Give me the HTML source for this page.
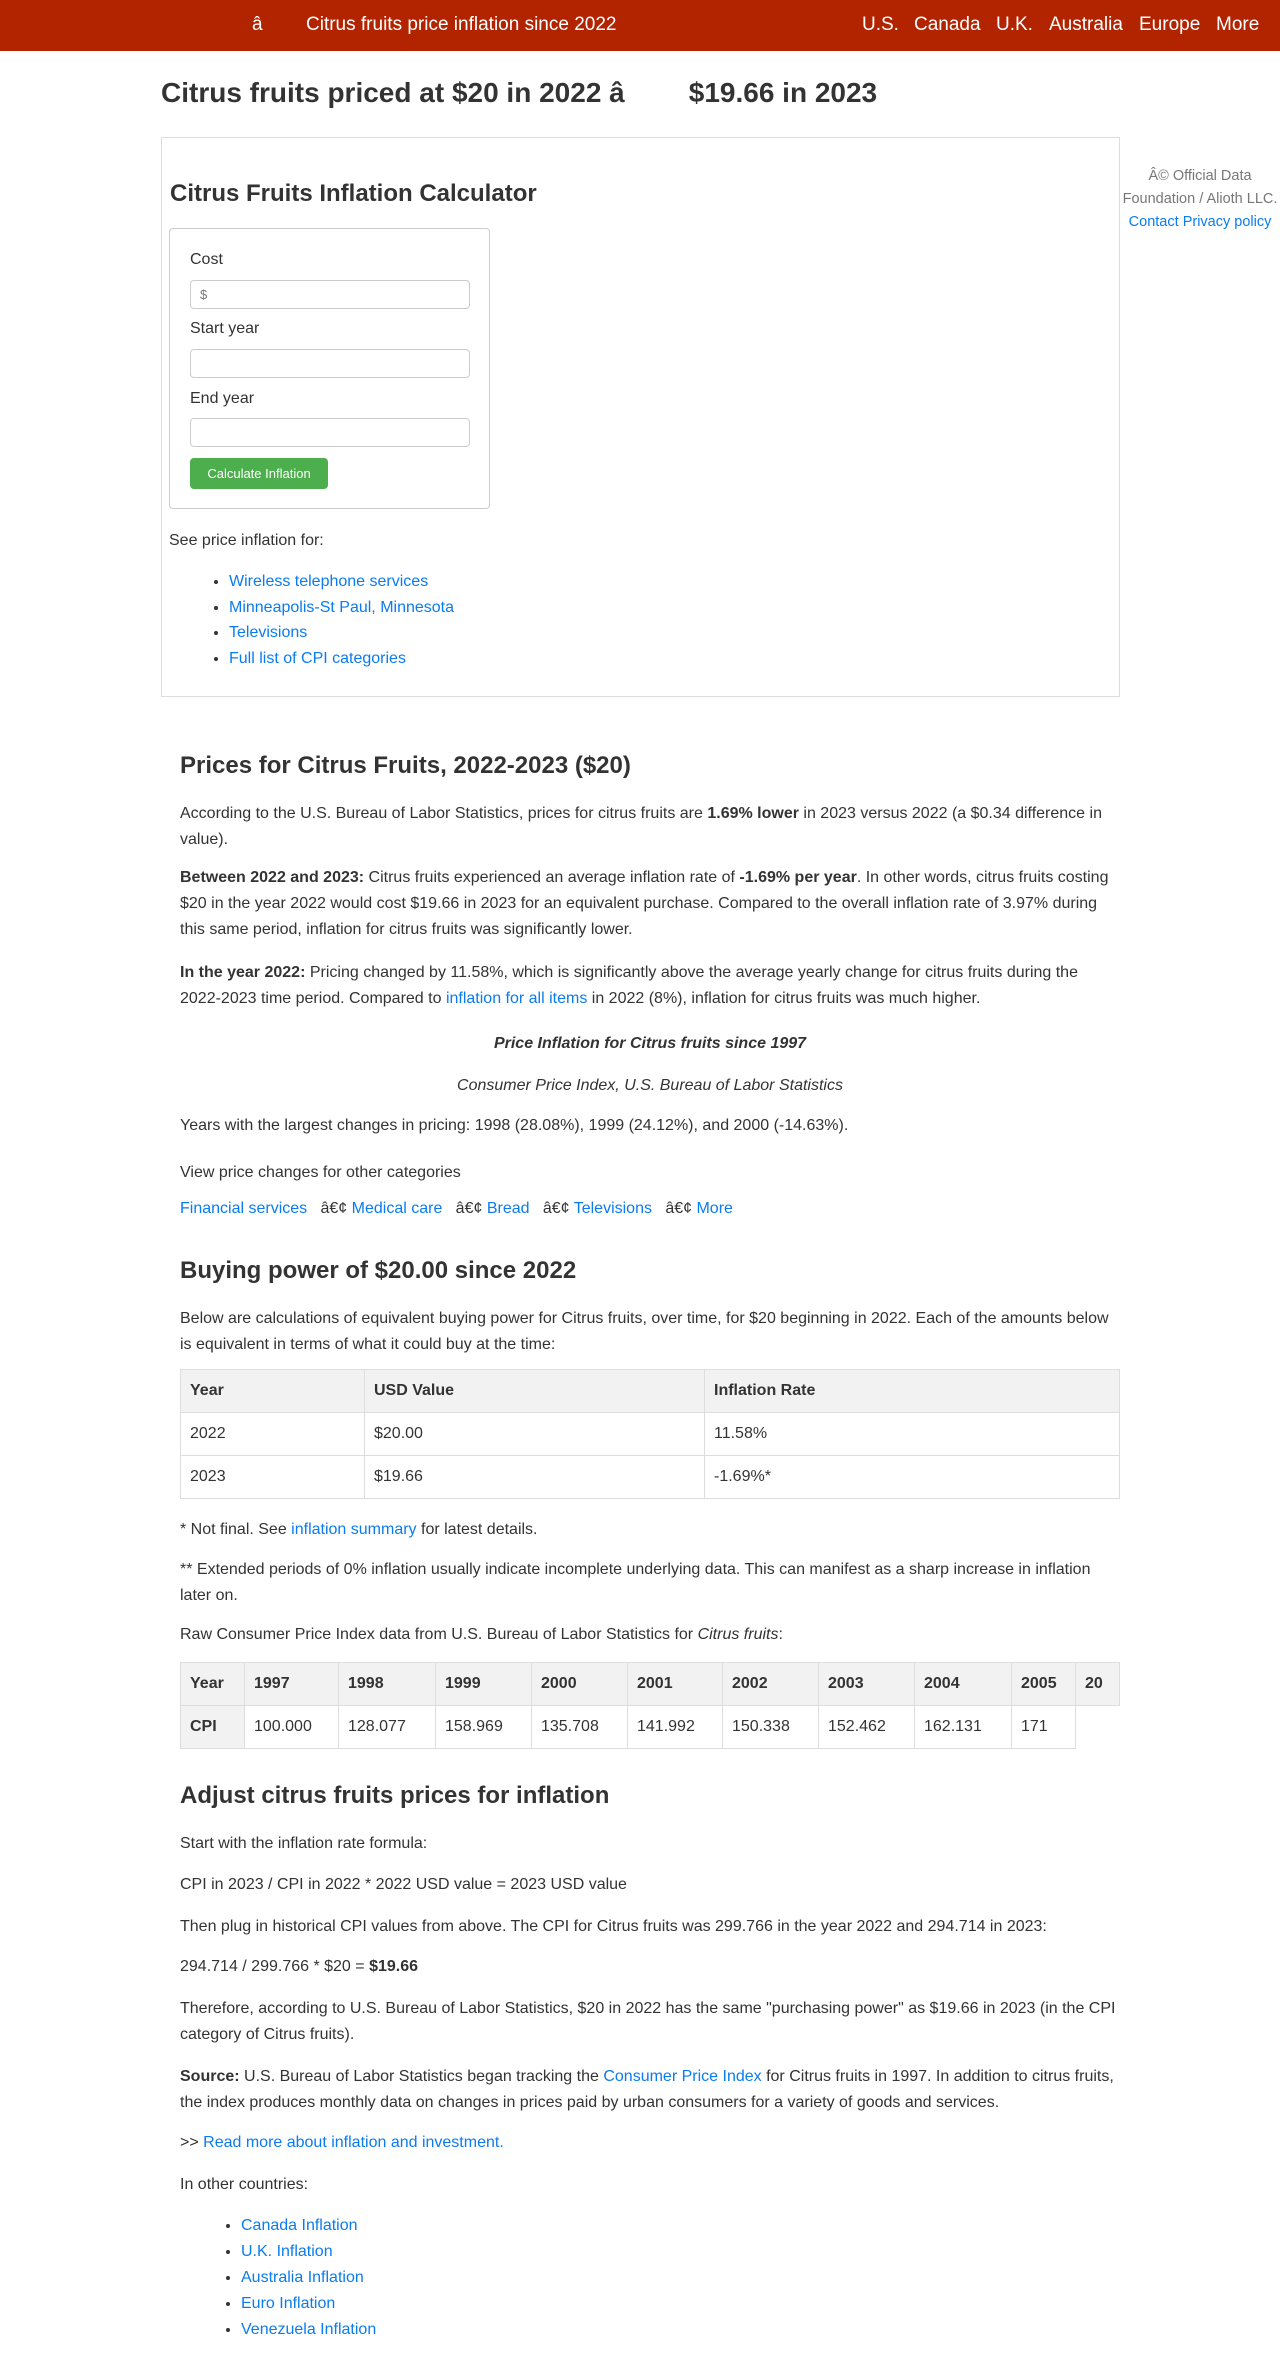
<!DOCTYPE html>
<html><head><meta charset="utf-8">
<style>
*{margin:0;padding:0;box-sizing:border-box}
body{width:1280px;height:2359px;position:relative;font-family:"Liberation Sans",Arial,sans-serif;color:#333;font-size:16px;line-height:26px;background:#fff;overflow:hidden}
.a{position:absolute}
a{color:#0a7cf0;text-decoration:none}
#hdr{left:0;top:0;width:1280px;height:51px;background:#b22400;color:#fff}
#hdr .n{position:absolute;top:12px;font-size:19px;line-height:26px;white-space:nowrap}
h1{font-size:28px;font-weight:bold;line-height:34px}
h2{font-size:24px;font-weight:bold;line-height:30px}
.p{left:180px;width:940px}
input{position:absolute;left:190px;width:280px;height:29px;border:1px solid #ccc;border-radius:4px;font-size:13px;padding-left:9px;color:#777;font-family:"Liberation Sans",sans-serif}
ul{list-style:disc}
table{border-collapse:collapse;position:absolute}
td,th{border:1px solid #ddd;text-align:left;padding:0 9px;height:43px;font-size:16px}
th{background:#f2f2f2;font-weight:bold}
.sb div{white-space:nowrap}
</style></head><body>
<div id="hdr" class="a">
<div class="n" style="left:252px">â</div>
<div class="n" style="left:306px">Citrus fruits price inflation since 2022</div>
<div class="n" style="left:862px">U.S.</div>
<div class="n" style="left:914px">Canada</div>
<div class="n" style="left:996px">U.K.</div>
<div class="n" style="left:1049px">Australia</div>
<div class="n" style="left:1139px">Europe</div>
<div class="n" style="left:1216px">More</div>
</div>
<h1 class="a" style="left:161px;top:76px;white-space:nowrap">Citrus fruits priced at $20 in 2022 â<span style="display:inline-block;width:64px"></span>$19.66 in 2023</h1>

<div class="a" style="left:161px;top:137px;width:959px;height:560px;border:1px solid #ddd"></div>
<h2 class="a" style="left:170px;top:179px">Citrus Fruits Inflation Calculator</h2>
<div class="a" style="left:169px;top:228px;width:321px;height:281px;border:1px solid #ccc;border-radius:4px"></div>
<div class="a" style="left:190px;top:247px">Cost</div>
<input style="top:280px" value="$">
<div class="a" style="left:190px;top:316px">Start year</div>
<input style="top:349px">
<div class="a" style="left:190px;top:386px">End year</div>
<input style="top:418px">
<div class="a" style="left:190px;top:458px;width:138px;height:31px;background:#4cae4c;border-radius:4px;color:#fff;font-size:13px;line-height:31px;text-align:center">Calculate Inflation</div>
<div class="a" style="left:169px;top:528px">See price inflation for:</div>
<ul class="a" style="left:229px;top:569px;line-height:25.5px">
<li><a>Wireless telephone services</a></li>
<li><a>Minneapolis-St Paul, Minnesota</a></li>
<li><a>Televisions</a></li>
<li><a>Full list of CPI categories</a></li>
</ul>

<div class="a sb" style="left:1120px;top:165px;width:160px;text-align:center;font-size:14.5px;line-height:23px;color:#777">
<div>Â© Official Data</div><div>Foundation / Alioth LLC.</div><div><a>Contact</a> <a>Privacy policy</a></div></div>

<h2 class="a" style="left:180px;top:751px">Prices for Citrus Fruits, 2022-2023 ($20)</h2>
<p class="a p" style="top:801px">According to the U.S. Bureau of Labor Statistics, prices for citrus fruits are <b>1.69% lower</b> in 2023 versus 2022 (a $0.34 difference in value).</p>
<p class="a p" style="top:865px"><b>Between 2022 and 2023:</b> Citrus fruits experienced an average inflation rate of <b>-1.69% per year</b>. In other words, citrus fruits costing $20 in the year 2022 would cost $19.66 in 2023 for an equivalent purchase. Compared to the overall inflation rate of 3.97% during this same period, inflation for citrus fruits was significantly lower.</p>
<p class="a p" style="top:960px"><b>In the year 2022:</b> Pricing changed by 11.58%, which is significantly above the average yearly change for citrus fruits during the 2022-2023 time period. Compared to <a>inflation for all items</a> in 2022 (8%), inflation for citrus fruits was much higher.</p>
<p class="a p" style="top:1031px;text-align:center"><b><i>Price Inflation for Citrus fruits since 1997</i></b></p>
<p class="a p" style="top:1073px;text-align:center"><i>Consumer Price Index, U.S. Bureau of Labor Statistics</i></p>
<p class="a p" style="top:1113px">Years with the largest changes in pricing: 1998 (28.08%), 1999 (24.12%), and 2000 (-14.63%).</p>
<p class="a p" style="top:1160px">View price changes for other categories</p>
<p class="a p" style="top:1196px;white-space:nowrap"><a>Financial services</a> &nbsp; â€¢ <a>Medical care</a> &nbsp; â€¢ <a>Bread</a> &nbsp; â€¢ <a>Televisions</a> &nbsp; â€¢ <a>More</a></p>

<h2 class="a" style="left:180px;top:1256px">Buying power of $20.00 since 2022</h2>
<p class="a p" style="top:1306px">Below are calculations of equivalent buying power for Citrus fruits, over time, for $20 beginning in 2022. Each of the amounts below is equivalent in terms of what it could buy at the time:</p>
<table style="left:180px;top:1369px;width:940px">
<tr><th style="width:184px">Year</th><th style="width:340px">USD Value</th><th>Inflation Rate</th></tr>
<tr><td>2022</td><td>$20.00</td><td>11.58%</td></tr>
<tr><td>2023</td><td>$19.66</td><td>-1.69%*</td></tr>
</table>
<p class="a p" style="top:1517px">* Not final. See <a>inflation summary</a> for latest details.</p>
<p class="a p" style="top:1557px">** Extended periods of 0% inflation usually indicate incomplete underlying data. This can manifest as a sharp increase in inflation later on.</p>
<p class="a p" style="top:1622px">Raw Consumer Price Index data from U.S. Bureau of Labor Statistics for <i>Citrus fruits</i>:</p>
<table style="left:180px;top:1662px;width:940px;table-layout:fixed">
<tr><th style="width:64px">Year</th><th style="width:94px">1997</th><th style="width:97px">1998</th><th style="width:96px">1999</th><th style="width:96px">2000</th><th style="width:95px">2001</th><th style="width:96px">2002</th><th style="width:96px">2003</th><th style="width:97px">2004</th><th style="width:64px">2005</th><th>20</th></tr>
<tr><th>CPI</th><td>100.000</td><td>128.077</td><td>158.969</td><td>135.708</td><td>141.992</td><td>150.338</td><td>152.462</td><td>162.131</td><td>171</td><td style="border:none;border-left:1px solid #ddd"></td></tr>
</table>

<h2 class="a" style="left:180px;top:1781px">Adjust citrus fruits prices for inflation</h2>
<p class="a p" style="top:1831px">Start with the inflation rate formula:</p>
<p class="a p" style="top:1872px">CPI in 2023 / CPI in 2022 * 2022 USD value = 2023 USD value</p>
<p class="a p" style="top:1914px">Then plug in historical CPI values from above. The CPI for Citrus fruits was 299.766 in the year 2022 and 294.714 in 2023:</p>
<p class="a p" style="top:1954px">294.714 / 299.766 * $20 = <b>$19.66</b></p>
<p class="a p" style="top:1996px">Therefore, according to U.S. Bureau of Labor Statistics, $20 in 2022 has the same "purchasing power" as $19.66 in 2023 (in the CPI category of Citrus fruits).</p>
<p class="a p" style="top:2064px"><b>Source:</b> U.S. Bureau of Labor Statistics began tracking the <a>Consumer Price Index</a> for Citrus fruits in 1997. In addition to citrus fruits, the index produces monthly data on changes in prices paid by urban consumers for a variety of goods and services.</p>
<p class="a p" style="top:2130px">&gt;&gt; <a>Read more about inflation and investment.</a></p>
<p class="a p" style="top:2172px">In other countries:</p>
<ul class="a" style="left:241px;top:2213px;line-height:26px">
<li><a>Canada Inflation</a></li>
<li><a>U.K. Inflation</a></li>
<li><a>Australia Inflation</a></li>
<li><a>Euro Inflation</a></li>
<li><a>Venezuela Inflation</a></li>
</ul>
</body></html>
